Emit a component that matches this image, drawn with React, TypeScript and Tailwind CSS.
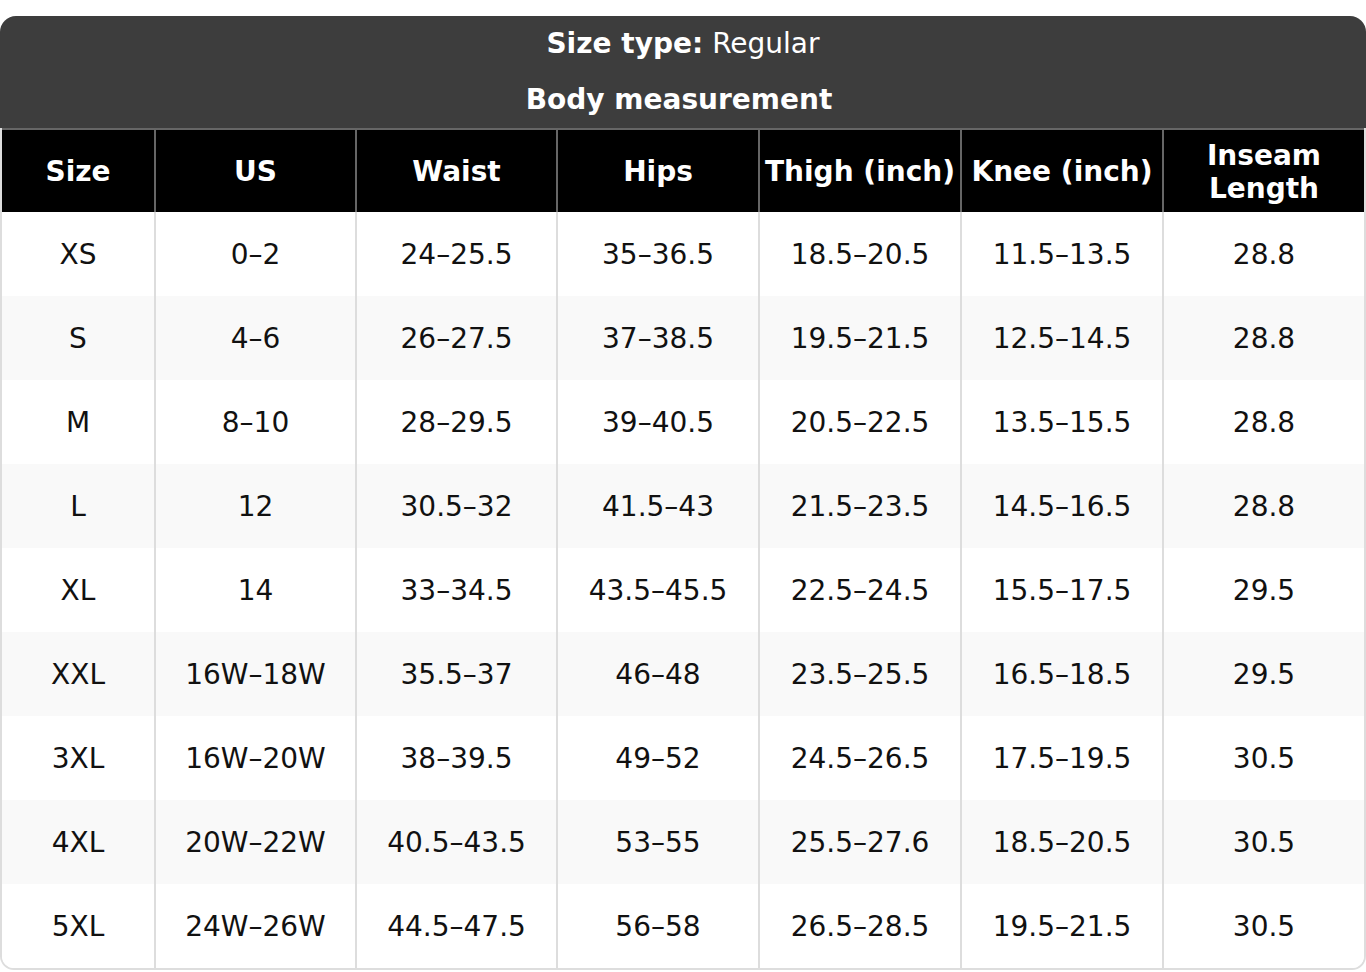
import React from "react";

interface SizeRow {
  size: string;
  us: string;
  waist: string;
  hips: string;
  thigh: string;
  knee: string;
  inseam: string;
}

const rows: SizeRow[] = [
  { size: "XS", us: "0–2", waist: "24–25.5", hips: "35–36.5", thigh: "18.5–20.5", knee: "11.5–13.5", inseam: "28.8" },
  { size: "S", us: "4–6", waist: "26–27.5", hips: "37–38.5", thigh: "19.5–21.5", knee: "12.5–14.5", inseam: "28.8" },
  { size: "M", us: "8–10", waist: "28–29.5", hips: "39–40.5", thigh: "20.5–22.5", knee: "13.5–15.5", inseam: "28.8" },
  { size: "L", us: "12", waist: "30.5–32", hips: "41.5–43", thigh: "21.5–23.5", knee: "14.5–16.5", inseam: "28.8" },
  { size: "XL", us: "14", waist: "33–34.5", hips: "43.5–45.5", thigh: "22.5–24.5", knee: "15.5–17.5", inseam: "29.5" },
  { size: "XXL", us: "16W–18W", waist: "35.5–37", hips: "46–48", thigh: "23.5–25.5", knee: "16.5–18.5", inseam: "29.5" },
  { size: "3XL", us: "16W–20W", waist: "38–39.5", hips: "49–52", thigh: "24.5–26.5", knee: "17.5–19.5", inseam: "30.5" },
  { size: "4XL", us: "20W–22W", waist: "40.5–43.5", hips: "53–55", thigh: "25.5–27.6", knee: "18.5–20.5", inseam: "30.5" },
  { size: "5XL", us: "24W–26W", waist: "44.5–47.5", hips: "56–58", thigh: "26.5–28.5", knee: "19.5–21.5", inseam: "30.5" },
];

const headers = ["Size", "US", "Waist", "Hips", "Thigh (inch)", "Knee (inch)", "Inseam Length"];

const cols = "grid grid-cols-[152px_201px_201px_202px_202px_202px_1fr]";

export default function App() {
  return (
    <div className="min-h-screen bg-white pt-4 font-['DejaVu_Sans',sans-serif] text-[28px]">
      <div className="w-full">
        {/* Title band */}
        <div className="bg-[#3d3d3d] rounded-t-[16px] text-white">
          <div className="h-[56px] flex items-center justify-center">
            <span className="font-bold">Size type:</span>
            <span className="ml-[9px]">Regular</span>
          </div>
          <div className="h-[56px] flex items-center justify-center font-bold pr-[8px]">
            Body measurement
          </div>
        </div>

        {/* Table */}
        <div className="border-x-2 border-b-2 border-[#dddddd] rounded-b-[14px] overflow-hidden">
          <div className={`${cols} bg-black text-white font-bold border-t-2 border-[#666666] h-[84px]`}>
            {headers.map((h, i) => (
              <div
                key={h}
                className={`flex items-center justify-center text-center leading-[33px] pt-[1px] ${
                  i > 0 ? "border-l-2 border-[#666666]" : ""
                } ${h === "Inseam Length" ? "px-10" : ""}`}
              >
                {h}
              </div>
            ))}
          </div>
          {rows.map((r, idx) => {
            const cells = [r.size, r.us, r.waist, r.hips, r.thigh, r.knee, r.inseam];
            return (
              <div
                key={r.size}
                className={`${cols} h-[84px] text-[#111111] ${idx % 2 === 1 ? "bg-[#f9f9f9]" : "bg-white"}`}
              >
                {cells.map((c, i) => (
                  <div
                    key={i}
                    className={`flex items-center justify-center pt-[2px] ${i > 0 ? "border-l-2 border-[#dddddd]" : ""}`}
                  >
                    {c}
                  </div>
                ))}
              </div>
            );
          })}
        </div>
      </div>
    </div>
  );
}
